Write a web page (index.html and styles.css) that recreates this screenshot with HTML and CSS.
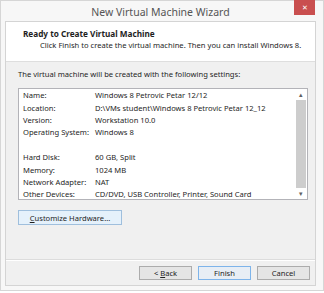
FILE: index.html
```html
<!DOCTYPE html>
<html lang="en">
<head>
  <meta charset="UTF-8">
  <title>New Virtual Machine Wizard</title>
  <link rel="stylesheet" href="styles.css">
</head>
<body>
<div class="window">
  <div class="titlebar">
    <span class="title">New Virtual Machine Wizard</span>
    <span class="close">&#x2715;</span>
  </div>
  <div class="client">
    <header class="head">
      <h1>Ready to Create Virtual Machine</h1>
      <p>Click Finish to create the virtual machine. Then you can install Windows 8.</p>
    </header>
    <section class="main">
      <p class="intro">The virtual machine will be created with the following settings:</p>
      <div class="listbox">
        <table class="settings">
          <tr><td>Name:</td><td>Windows 8 Petrovic Petar 12/12</td></tr>
          <tr><td>Location:</td><td>D:\VMs student\Windows 8 Petrovic Petar 12_12</td></tr>
          <tr><td>Version:</td><td>Workstation 10.0</td></tr>
          <tr><td>Operating System:</td><td>Windows 8</td></tr>
          <tr><td>&nbsp;</td><td></td></tr>
          <tr><td>Hard Disk:</td><td>60 GB, Split</td></tr>
          <tr><td>Memory:</td><td>1024 MB</td></tr>
          <tr><td>Network Adapter:</td><td>NAT</td></tr>
          <tr><td>Other Devices:</td><td>CD/DVD, USB Controller, Printer, Sound Card</td></tr>
        </table>
        <div class="scrollbar">
          <span class="arrow">&#x25B4;</span>
          <span class="thumb"></span>
          <span class="arrow">&#x25BE;</span>
        </div>
      </div>
      <button class="btn custom"><u>C</u>ustomize Hardware...</button>
    </section>
    <footer class="foot">
      <button class="btn">&lt; <u>B</u>ack</button>
      <button class="btn default">Finish</button>
      <button class="btn">Cancel</button>
    </footer>
  </div>
</div>
</body>
</html>
```

FILE: styles.css
```css
body {
  margin: 0;
  background: #ffffff;
  font-family: "Noto Sans", "Open Sans", sans-serif;
  font-size: 7.6px;
  color: #1e1e1e;
}

.window {
  width: 324px;
  height: 291px;
  box-sizing: border-box;
  border: 1px solid #d6d6d6;
  background: #f7f7f7;
  display: flex;
  flex-direction: column;
  padding: 0 7px 4px 4px;
}

.titlebar {
  height: 20px;
  flex: none;
  position: relative;
  display: flex;
  align-items: center;
  justify-content: center;
}

.titlebar .title {
  font-size: 10.5px;
  color: #555555;
  padding-top: 2px;
}

.titlebar .close {
  position: absolute;
  right: 1px;
  top: -1px;
  width: 21px;
  height: 15px;
  background: #c94f4f;
  color: #ffffff;
  font-size: 7px;
  display: flex;
  align-items: center;
  justify-content: center;
}

.client {
  flex: 1;
  display: flex;
  flex-direction: column;
  border: 1px solid #d4d4d4;
  background: #f0f0f0;
}

.head {
  background: #ffffff;
  height: 40px;
  flex: none;
  box-sizing: border-box;
  border-bottom: 1px solid #dedede;
  padding: 6px 0 0 17px;
}

.head h1 {
  margin: 0;
  font-size: 8.2px;
  font-weight: bold;
  line-height: 11px;
}

.head p {
  margin: 1px 0 0 17px;
  line-height: 11px;
}

.main {
  flex: 1;
  padding: 6px 7px 0 12px;
  border-bottom: 1px solid #dcdcdc;
}

.intro {
  margin: 0 0 8px 0;
  line-height: 12px;
}

.listbox {
  height: 112px;
  box-sizing: border-box;
  border: 1px solid #b3b3b8;
  background: #ffffff;
  display: flex;
}

.settings {
  flex: 1;
  border-collapse: collapse;
  margin: 0 0 0 4px;
  align-self: flex-start;
}

.settings td {
  padding: 0;
  height: 12.4px;
  line-height: 12px;
  white-space: nowrap;
}

.settings td:first-child {
  width: 72px;
}

.scrollbar {
  width: 11px;
  display: flex;
  flex-direction: column;
  align-items: center;
  margin-right: 1px;
}

.scrollbar .arrow {
  height: 11px;
  line-height: 11px;
  font-size: 7px;
  color: #606060;
}

.scrollbar .thumb {
  flex: 1;
  width: 10px;
  background: #cdcdcd;
}

.btn {
  font-family: inherit;
  font-size: 7.6px;
  color: #1e1e1e;
  background: #e5e5e5;
  border: 1px solid #acacac;
  height: 15px;
  padding: 0;
}

.btn.custom {
  margin-top: 10px;
  width: 104px;
  background: #e5f1fb;
  border-color: #9fbfdd;
}

.btn.default {
  border-color: #7eb4ea;
  background: #e8eef5;
}

.foot {
  height: 24px;
  flex: none;
  border-top: 1px solid #ffffff;
  display: flex;
  justify-content: flex-end;
  align-items: center;
  gap: 6px;
  padding-right: 5px;
}

.foot .btn {
  width: 53px;
  height: 14px;
}
```
